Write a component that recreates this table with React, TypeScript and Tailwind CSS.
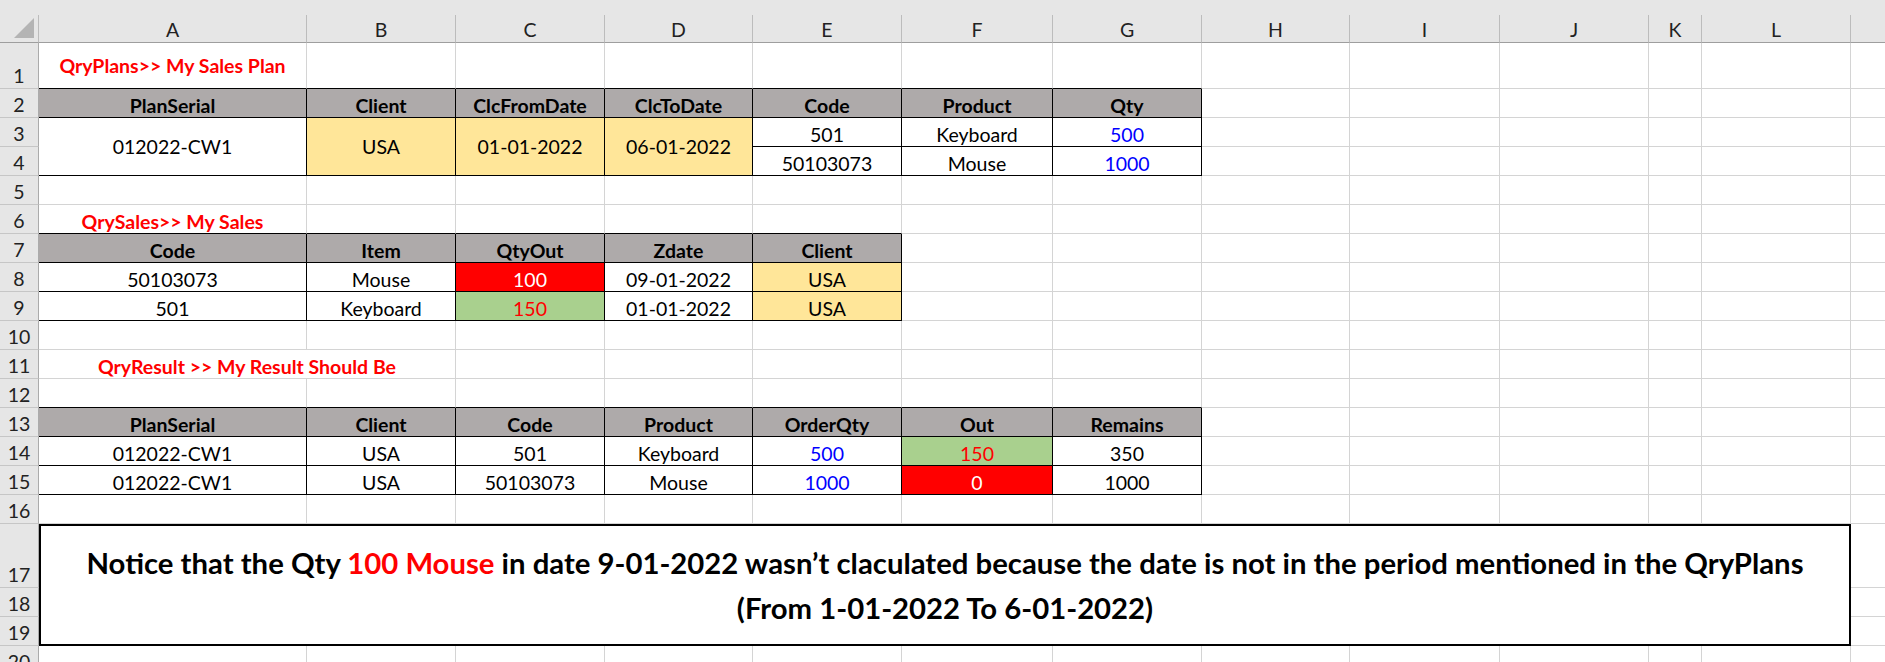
import React from "react";

type CellDef = {
	t?: React.ReactNode;
	cls?: string;
	span?: string;
	align?: string;
};

const COLS = ["A", "B", "C", "D", "E", "F", "G", "H", "I", "J", "K", "L", "M"];
const ROWS = Array.from({ length: 20 }, (_, i) => i + 1);

const HDR = "bg-[#aeaaaa] font-bold";
const YEL = "bg-[#ffe699]";
const GRN = "bg-[#a9d08e] text-[#ff0000]";
const RED = "bg-[#ff0000] text-white";
const BLUE = "text-[#0000ff]";
const TITLE = "font-bold text-[#ff0000]";

// tables that get thin black borders
const tables = [
	{ r1: 2, r2: 4, c1: 0, c2: 6 },
	{ r1: 7, r2: 9, c1: 0, c2: 4 },
	{ r1: 13, r2: 15, c1: 0, c2: 6 },
];

const inTable = (r: number, c: number) =>
	tables.some((t) => r >= t.r1 && r <= t.r2 && c >= t.c1 && c <= t.c2);

const notice = (
	<div className="text-center text-[29.3px] leading-[45px] font-bold text-black">
		Notice that the Qty <span className="text-[#ff0000]">100 Mouse</span> in date 9-01-2022 wasn’t claculated
		because the date is not in the period mentioned in the QryPlans
		<br />
		(From 1-01-2022 To 6-01-2022)
	</div>
);

const cells: Record<string, CellDef> = {
	A1: { t: "QryPlans>> My Sales Plan", cls: TITLE, align: "items-center" },

	A2: { t: "PlanSerial", cls: HDR },
	B2: { t: "Client", cls: HDR },
	C2: { t: "ClcFromDate", cls: HDR },
	D2: { t: "ClcToDate", cls: HDR },
	E2: { t: "Code", cls: HDR },
	F2: { t: "Product", cls: HDR },
	G2: { t: "Qty", cls: HDR },

	A3: { t: "012022-CW1", span: "row-span-2", align: "items-center" },
	B3: { t: "USA", cls: YEL, span: "row-span-2", align: "items-center" },
	C3: { t: "01-01-2022", cls: YEL, span: "row-span-2", align: "items-center" },
	D3: { t: "06-01-2022", cls: YEL, span: "row-span-2", align: "items-center" },
	E3: { t: "501" },
	F3: { t: "Keyboard" },
	G3: { t: "500", cls: BLUE },
	E4: { t: "50103073" },
	F4: { t: "Mouse" },
	G4: { t: "1000", cls: BLUE },

	A6: { t: "QrySales>> My Sales", cls: TITLE },
	A7: { t: "Code", cls: HDR },
	B7: { t: "Item", cls: HDR },
	C7: { t: "QtyOut", cls: HDR },
	D7: { t: "Zdate", cls: HDR },
	E7: { t: "Client", cls: HDR },
	A8: { t: "50103073" },
	B8: { t: "Mouse" },
	C8: { t: "100", cls: RED },
	D8: { t: "09-01-2022" },
	E8: { t: "USA", cls: YEL },
	A9: { t: "501" },
	B9: { t: "Keyboard" },
	C9: { t: "150", cls: GRN },
	D9: { t: "01-01-2022" },
	E9: { t: "USA", cls: YEL },

	A11: { t: "QryResult >> My Result Should Be", cls: TITLE, span: "col-span-2" },

	A13: { t: "PlanSerial", cls: HDR },
	B13: { t: "Client", cls: HDR },
	C13: { t: "Code", cls: HDR },
	D13: { t: "Product", cls: HDR },
	E13: { t: "OrderQty", cls: HDR },
	F13: { t: "Out", cls: HDR },
	G13: { t: "Remains", cls: HDR },
	A14: { t: "012022-CW1" },
	B14: { t: "USA" },
	C14: { t: "501" },
	D14: { t: "Keyboard" },
	E14: { t: "500", cls: BLUE },
	F14: { t: "150", cls: GRN },
	G14: { t: "350" },
	A15: { t: "012022-CW1" },
	B15: { t: "USA" },
	C15: { t: "50103073" },
	D15: { t: "Mouse" },
	E15: { t: "1000", cls: BLUE },
	F15: { t: "0", cls: RED },
	G15: { t: "1000" },

	A17: { t: notice, span: "col-span-12 row-span-3", align: "items-center" },
};

// cells hidden under merged ranges
const covered = new Set<string>(["A4", "B4", "C4", "D4", "B11"]);
for (let r = 17; r <= 19; r++) {
	for (let c = 0; c < 12; c++) {
		if (!(r === 17 && c === 0)) covered.add(`${COLS[c]}${r}`);
	}
}

function borderCls(r: number, c: number, key: string) {
	if (key === "A17") return "border-2 border-black";
	if (inTable(r, c)) return "border-r border-b border-black";
	if (inTable(r + 1, c)) return "border-r border-b border-r-[#d4d4d4] border-b-black";
	return "border-r border-b border-[#d4d4d4]";
}

export default function App() {
	return (
		<div className="w-[1885px] h-[662px] overflow-hidden bg-white text-black text-[19.5px] font-[family-name:Lato,'Liberation_Sans',sans-serif]">
			<div className="h-[15px] bg-[#e6e6e6]" />
			<div className="grid w-[2000px] grid-cols-[39px_268px_149px_149px_148px_149px_151px_149px_148px_150px_149px_53px_149px_149px] grid-rows-[28px_46px_repeat(15,29px)_64px_29px_29px_29px]">
				{/* column headings */}
				<div className="flex items-end justify-end pr-[4px] pb-[4px] bg-[#e6e6e6] border-r border-b border-r-[#bcbcbc] border-b-[#9e9e9e]">
					<svg width="20" height="20" viewBox="0 0 20 20">
						<polygon points="20,0 20,20 0,20" fill="#b4b4b4" />
					</svg>
				</div>
				{COLS.map((col) => (
					<div
						key={col}
						className="flex items-end justify-center pb-[1px] leading-[normal] bg-[#e6e6e6] text-[#222] border-r border-b border-r-[#bcbcbc] border-b-[#9e9e9e]"
					>
						{col}
					</div>
				))}

				{ROWS.map((r) => (
					<React.Fragment key={r}>
						<div className="flex items-end justify-center pb-[1px] leading-[normal] bg-[#e6e6e6] text-[#222] border-r border-b border-r-[#ababab] border-b-[#c6c6c6]">
							{r}
						</div>
						{COLS.map((col, c) => {
							const key = `${col}${r}`;
							if (covered.has(key)) return null;
							const cell = cells[key] ?? {};
							return (
								<div
									key={key}
									className={`flex justify-center whitespace-nowrap leading-[normal] ${cell.align ?? "items-end"} ${borderCls(r, c, key)} ${cell.cls ?? "bg-white"} ${cell.span ?? ""}`}
								>
									{cell.t}
								</div>
							);
						})}
					</React.Fragment>
				))}
			</div>
		</div>
	);
}
